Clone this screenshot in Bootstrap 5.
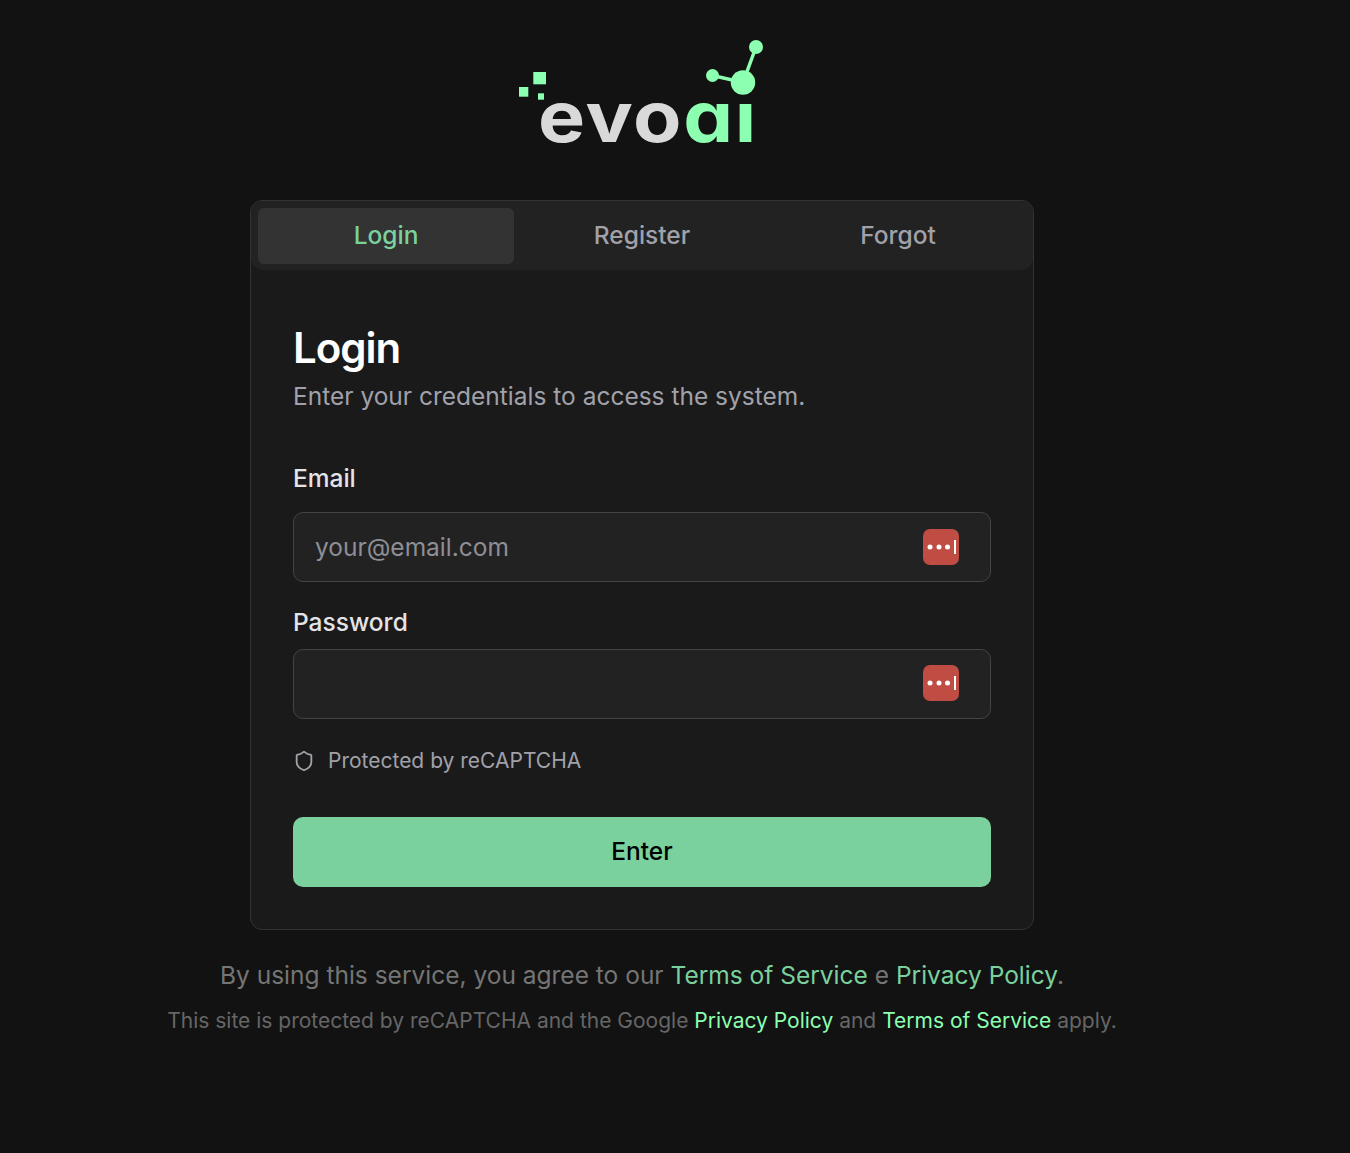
<!DOCTYPE html>
<html lang="en" data-bs-theme="dark">
<head>
    <meta charset="UTF-8">
    <meta name="viewport" content="width=device-width, initial-scale=1.0">
    <title>Login</title>
    <link href="https://cdn.jsdelivr.net/npm/bootstrap@5.3.0/dist/css/bootstrap.min.css" rel="stylesheet">
    <style>
        html, body { height: 100%; }
        body {
            background: #121212;
            font-family: "Inter", "Liberation Sans", sans-serif;
            color: #fff;
        }
        .page-wrap { width: 1284px; padding-top: 40px; }
        .logo-box { width: 246px; height: 160px; position: relative; }
        .logo-box svg { position: absolute; left: 0; top: 0; }
        .logo-text {
            position: absolute;
            left: 19px;
            top: 32px;
            font-size: 70px;
            line-height: 90px;
            font-weight: 700;
            letter-spacing: 1.5px;
            font-feature-settings: "cv11" 1;
            color: #d9d9d9;
            white-space: nowrap;
            transform: scaleX(1.13);
            transform-origin: left center;
        }
        .logo-text span { color: #8cffb0; }
        .login-card {
            width: 784px;
            background: #1a1a1a;
            border: 1px solid #333;
            border-radius: 12px;
            overflow: hidden;
        }
        .tab-bar { background: #222; padding: 7px; height: 69px; border-radius: 12px; }
        .tab-item {
            flex: 1 1 0;
            height: 56px;
            border: 0;
            padding: 0 0 2px;
            background: transparent;
            border-radius: 6px;
            font-size: 24.500px;
            font-weight: 500;
            color: #a1a1aa;
        }
        .tab-item.is-active { background: #333; color: #7ad19d; }
        .card-inner { padding: 50px 42px 42px; }
        .card-title-text { font-size: 42px; line-height: 56px; font-weight: 600; letter-spacing: -1px; margin: 0; }
        .card-desc { font-size: 24.500px; line-height: 36px; color: #a1a1aa; margin: 2px 0 53px; }
        .field-label { font-size: 24.500px; line-height: 22px; font-weight: 500; color: #e4e4e7; display: block; }
        .label-email { margin-bottom: 23px; }
        .label-pass { margin-bottom: 16px; }
        .field-box { position: relative; }
        .field-gap { margin-bottom: 29px; }
        .field-input {
            height: 70px;
            background: #222;
            border: 1px solid #444;
            border-radius: 10px;
            font-size: 24.500px;
            color: #fff;
            padding: 0 21px;
        }
        .field-input::placeholder { color: #8e8e96; }
        .pass-badge { position: absolute; right: 32px; top: 17px; }
        .badge-pass { top: 16px; }
        .recaptcha-note { font-size: 21px; line-height: 28px; color: #a1a1aa; gap: 13px; margin: 28px 0 42px; }
        .enter-btn {
            height: 70px;
            background: #7ad19d;
            border: 0;
            padding: 0 0 2px;
            border-radius: 10px;
            color: #000;
            font-size: 24.500px;
            font-weight: 500;
        }
        .foot-one { font-size: 24.500px; line-height: 32px; color: #757575; margin: 29px 0 0; }
        .foot-one a { color: #7ad19d; text-decoration: none; }
        .foot-two { font-size: 21px; line-height: 28px; color: #666; margin: 16px 0 0; }
        .foot-two a { color: #8cffb0; text-decoration: none; }
    </style>
</head>
<body>
<div class="page-wrap d-flex flex-column align-items-center">
    <div class="logo-box">
        <svg width="246" height="110" viewBox="0 0 246 110" fill="#8cffb0">
            <rect x="14.300" y="32" width="12.700" height="12.300"/>
            <rect x="0" y="47" width="9.300" height="9.700"/>
            <rect x="19" y="53.300" width="6" height="6.400"/>
            <path d="M237 7 L224 42.500 L193.500 35.500" fill="none" stroke="#8cffb0" stroke-width="3.500"/>
            <circle cx="237" cy="7" r="7"/>
            <circle cx="224" cy="42.500" r="12.200"/>
            <circle cx="193.500" cy="35.500" r="6.500"/>
        </svg>
        <div class="logo-text">evo<span>aı</span></div>
    </div>

    <div class="login-card">
        <div class="tab-bar d-flex">
            <button class="tab-item is-active" type="button">Login</button>
            <button class="tab-item" type="button">Register</button>
            <button class="tab-item" type="button">Forgot</button>
        </div>
        <div class="card-inner">
            <h1 class="card-title-text">Login</h1>
            <p class="card-desc">Enter your credentials to access the system.</p>
            <form>
                <label class="field-label label-email" for="email">Email</label>
                <div class="field-box field-gap">
                    <input class="form-control field-input" id="email" type="email" placeholder="your@email.com">
                    <svg class="pass-badge" width="36" height="36" viewBox="0 0 36 36">
                        <rect width="36" height="36" rx="7" fill="#bf4d43"/>
                        <g fill="#fff"><circle cx="7" cy="18" r="2.500"/><circle cx="16" cy="18" r="2.500"/><circle cx="24.500" cy="18" r="2.500"/><rect x="31" y="11" width="2" height="14"/></g>
                    </svg>
                </div>
                <label class="field-label label-pass" for="password">Password</label>
                <div class="field-box">
                    <input class="form-control field-input" id="password" type="password">
                    <svg class="pass-badge badge-pass" width="36" height="36" viewBox="0 0 36 36">
                        <rect width="36" height="36" rx="7" fill="#bf4d43"/>
                        <g fill="#fff"><circle cx="7" cy="18" r="2.500"/><circle cx="16" cy="18" r="2.500"/><circle cx="24.500" cy="18" r="2.500"/><rect x="31" y="11" width="2" height="14"/></g>
                    </svg>
                </div>
                <div class="recaptcha-note d-flex align-items-center">
                    <svg width="22" height="22" viewBox="0 0 24 24" fill="none" stroke="#a1a1aa" stroke-width="2" stroke-linecap="round" stroke-linejoin="round"><path d="M20 13c0 5-3.500 7.500-7.660 8.950a1 1 0 0 1-.67-.01C7.500 20.500 4 18 4 13V6a1 1 0 0 1 1-1c2 0 4.500-1.200 6.240-2.720a1.170 1.170 0 0 1 1.520 0C14.510 3.810 17 5 19 5a1 1 0 0 1 1 1z"/></svg>
                    <span>Protected by reCAPTCHA</span>
                </div>
                <button class="btn enter-btn w-100" type="button">Enter</button>
            </form>
        </div>
    </div>

    <p class="foot-one text-center">By using this service, you agree to our <a href="#">Terms of Service</a> e <a href="#">Privacy Policy</a>.</p>
    <p class="foot-two text-center">This site is protected by reCAPTCHA and the Google <a href="#">Privacy Policy</a> and <a href="#">Terms of Service</a> apply.</p>
</div>
<script src="https://cdn.jsdelivr.net/npm/bootstrap@5.3.0/dist/js/bootstrap.bundle.min.js"></script>
</body>
</html>
